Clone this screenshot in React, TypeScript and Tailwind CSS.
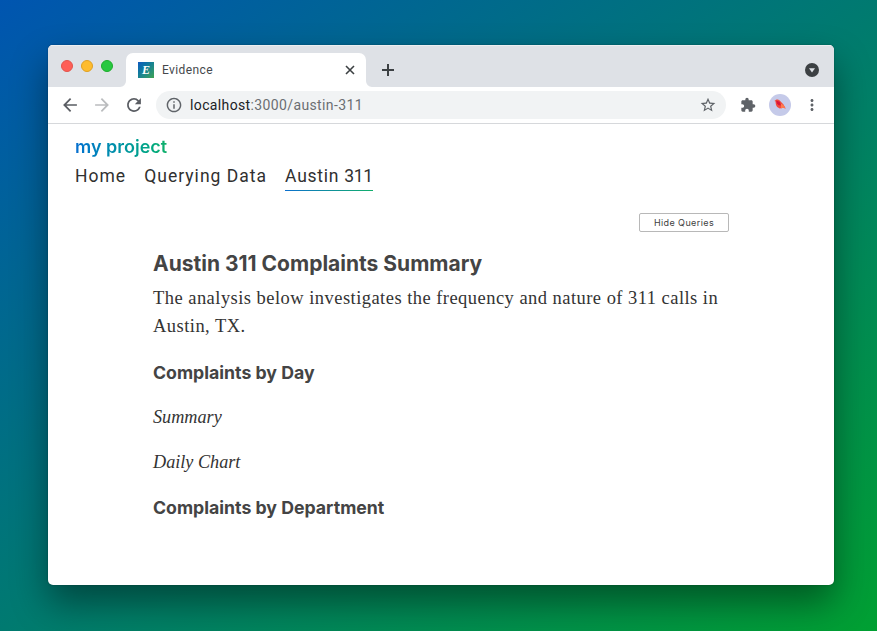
import {
  MdAdd,
  MdArrowBack,
  MdArrowForward,
  MdClose,
  MdExtension,
  MdInfoOutline,
  MdMoreVert,
  MdRefresh,
  MdStarBorder,
} from "react-icons/md";

function Favicon() {
  return (
    <span className="flex h-4 w-4 items-center justify-center bg-gradient-to-br from-[#1558c0] to-[#3fa34d] font-['Liberation_Serif',serif] text-[12px] leading-4 font-bold text-white italic">
      E
    </span>
  );
}

function TabFlare({ flip = false }: { flip?: boolean }) {
  return (
    <svg width="6" height="6" viewBox="0 0 6 6" className={flip ? "-scale-x-100 self-end" : "self-end"}>
      <path d="M6 0v6H0a6 6 0 0 0 6-6z" fill="#fff" />
    </svg>
  );
}

function TabStrip() {
  return (
    <div className="flex h-[42px] items-end bg-[#dee1e6] shadow-[inset_0_1px_0_#eceef0]">
      <div className="flex h-full w-[72px] gap-2 pt-[15px] pl-[13px]">
        <span className="h-3 w-3 rounded-full border border-[#e2544c] bg-[#fe5f57]" />
        <span className="h-3 w-3 rounded-full border border-[#dfa023] bg-[#febc2e]" />
        <span className="h-3 w-3 rounded-full border border-[#1dad2b] bg-[#28c840]" />
      </div>
      <TabFlare />
      <div className="flex h-[34px] w-[240px] items-center rounded-t-[7px] bg-white pr-[9px] pl-3">
        <Favicon />
        <span className="ml-2 flex-1 font-['Roboto',sans-serif] text-[12px] tracking-[0.4px] text-[#45484c]">
          Evidence
        </span>
        <svg width="14" height="14" viewBox="0 0 14 14" stroke="#3c4043" strokeWidth="1.6">
          <path d="m3 3 8 8M11 3l-8 8" />
        </svg>
      </div>
      <TabFlare flip />
      <div className="flex h-[34px] flex-1 items-center justify-between pr-[15px] pl-[7px]">
        <svg width="18" height="18" viewBox="0 0 18 18" stroke="#3c4043" strokeWidth="2">
          <path d="M9 3v12M3 9h12" />
        </svg>
        <svg width="14" height="14" viewBox="0 0 14 14">
          <circle cx="7" cy="7" r="7" fill="#3c4043" />
          <path d="M4 5.200h6L7 9.400z" fill="#dee1e6" />
        </svg>
      </div>
    </div>
  );
}

function Avatar() {
  return (
    <svg width="22" height="22" viewBox="0 0 22 22">
      <circle cx="11" cy="11" r="11" fill="#c5cae9" />
      <path d="M5.4 7 7 5.700c1.600-.4 3.400.2 4.600 1.700l2.900 3.200 2.200 4-2.500-.8-3.500.8-2.500-1.600C6.900 11.500 6.500 9.300 6.600 7.600z" fill="#f04a3e" />
      <path d="m7.3 6.500 3.200 1.200 1.900 3.900-2.600-.3c-1.700-1.100-2.600-2.800-2.500-4.800z" fill="#d9143a" />
      <path d="m11.8 9.600 2.700 1.400 2 3.600-2.300-.9-2.200.8z" fill="#ff7a4d" />
    </svg>
  );
}

function Toolbar() {
  return (
    <div className="flex h-[37px] items-center border-b border-[#d6d8db] bg-white pr-[13px] pl-[13px]">
      <div className="flex items-center gap-[14px]">
        <MdArrowBack size={18} color="#5a5d63" className="scale-[1.15]" />
        <MdArrowForward size={18} color="#babcbe" className="scale-[1.15]" />
        <MdRefresh size={18} color="#5a5d63" className="scale-[1.15]" />
      </div>
      <div className="ml-[13px] flex h-7 w-[570px] items-center rounded-full bg-[#f1f3f4] pr-[10px] pl-[10px]">
        <MdInfoOutline size={16} color="#5f6368" className="scale-110" />
        <span className="mt-px ml-2 flex-1 font-['Roboto',sans-serif] text-[14px] tracking-[0.37px] text-[#6b6e72]">
          <span className="text-[#202124]">localhost</span>:3000/austin-311
        </span>
        <MdStarBorder size={16} color="#5f6368" className="scale-110" />
      </div>
      <div className="flex flex-1 items-center justify-between pl-[14px]">
        <MdExtension size={16} color="#5f6368" />
        <Avatar />
        <MdMoreVert size={18} color="#5f6368" />
      </div>
    </div>
  );
}

function SiteHeader() {
  return (
    <header className="pt-[11px] pl-[27px]">
      <div className="flex h-6 items-center">
        <span className="bg-gradient-to-r from-[#0b6fd0] to-[#12b06a] bg-clip-text text-[18px] leading-6 font-semibold text-transparent">
          my project
        </span>
      </div>
      <nav className="flex h-8 gap-[18px] font-['Roboto',sans-serif] text-[17.5px] leading-[35px] tracking-[1.02px] text-[#303030]">
        <a>Home</a>
        <a>Querying Data</a>
        <a className="h-8 w-[88px] border-b tracking-[0.75px] whitespace-nowrap [border-image:linear-gradient(to_right,#0b6fd0,#12b06a)_1]">
          Austin <span className="tracking-[-0.4px]">311</span>
        </a>
      </nav>
    </header>
  );
}

function Report() {
  return (
    <main className="mr-[105px] ml-[105px] flex flex-col pt-[22px]">
      <button className="h-[19px] w-[90px] self-end rounded-[2px] border border-[#b8b8b8] text-[9px] leading-[17px] tracking-[0.4px] text-[#404040]">
        Hide Queries
      </button>
      <h1 className="mt-[17px] text-[21px] leading-[30px] font-bold text-[#444]">
        Austin 311 Complaints Summary
      </h1>
      <p className="mt-[5px] font-['Liberation_Serif',serif] text-[18.5px] leading-[28px] tracking-[0.46px] whitespace-nowrap text-[#333]">
        The analysis below investigates the frequency and nature of 311 calls in
        <br />
        Austin, TX.
      </p>
      <h2 className="mt-[19px] text-[17.7px] leading-[28px] font-bold text-[#444]">Complaints by Day</h2>
      <p className="mt-[16px] font-['Liberation_Serif',serif] text-[18.2px] leading-[28px] text-[#333] italic">
        Summary
      </p>
      <p className="mt-[17px] font-['Liberation_Serif',serif] text-[18.2px] leading-[28px] text-[#333] italic">
        Daily Chart
      </p>
      <h2 className="mt-[18px] text-[17.7px] leading-[28px] font-bold text-[#444]">Complaints by Department</h2>
    </main>
  );
}

export default function App() {
  return (
    <div className="h-[631px] w-[877px] overflow-hidden bg-[linear-gradient(to_bottom_right,#0055b0,#007a70_50%,#00a032)] pt-[45px] pl-12 font-['Inter',sans-serif]">
      <div className="h-[540px] w-[786px] overflow-hidden rounded-[5px] bg-white shadow-[0_18px_36px_rgba(0,0,0,0.42),0_0_2px_rgba(0,0,0,0.3)]">
        <TabStrip />
        <Toolbar />
        <SiteHeader />
        <Report />
      </div>
    </div>
  );
}
